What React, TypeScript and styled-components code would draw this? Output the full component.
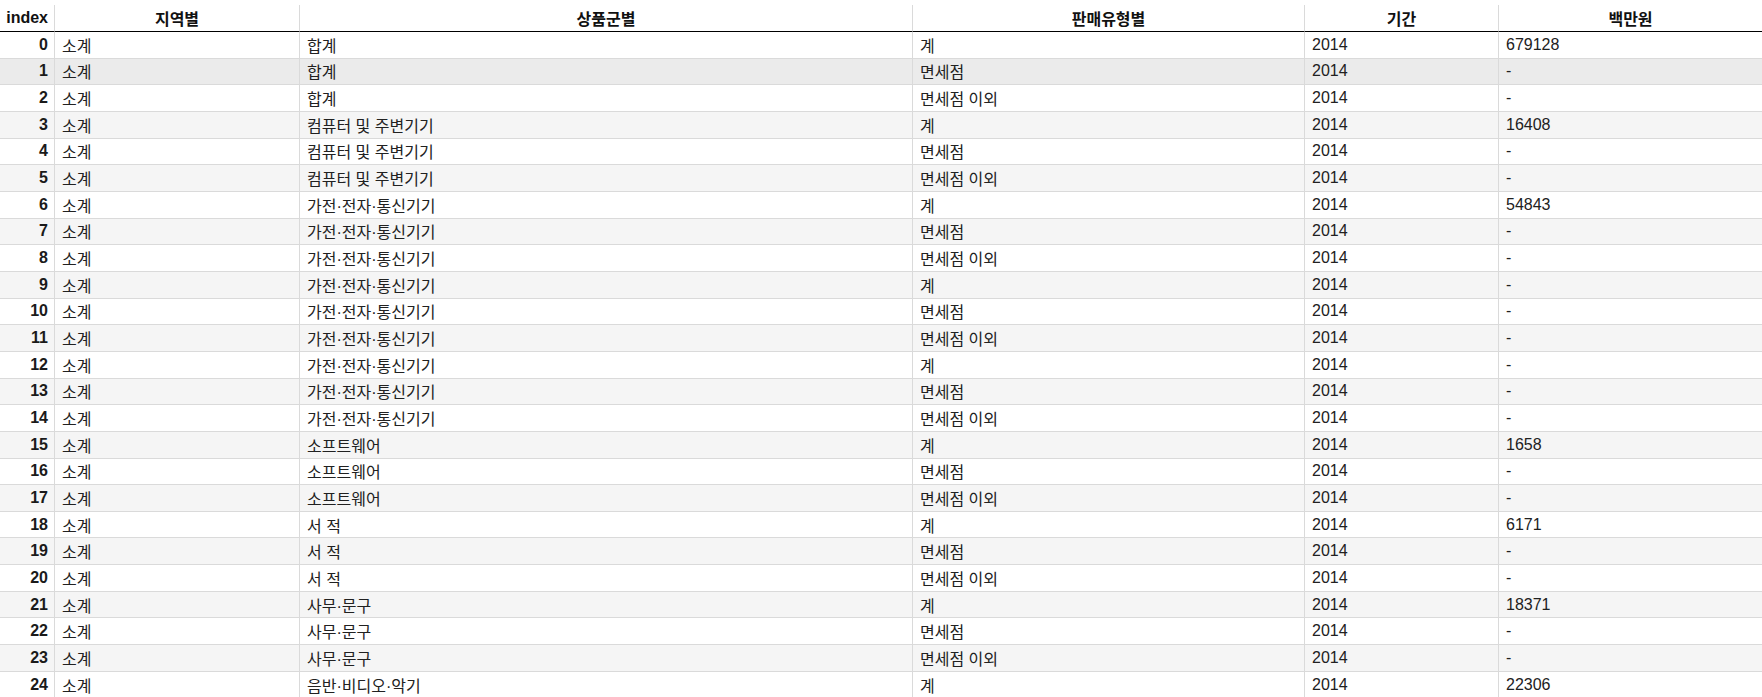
import React from 'react';
import styled, {createGlobalStyle} from "styled-components";

const GlobalStyle = createGlobalStyle`
    html, body {
        margin: 0;
        padding: 0;
        background: #ffffff;
    }
    body {
        font-family: "Liberation Sans", "Noto Sans CJK KR", Arial, sans-serif;
        color: #212121;
    }
`;

interface Row {
    region: string,
    product: string,
    saleType: string,
    period: string,
    value: string,
}

const products: [string, string][] = [
    ["합계", "679128"],
    ["컴퓨터 및 주변기기", "16408"],
    ["가전·전자·통신기기", "54843"],
    ["가전·전자·통신기기", "-"],
    ["가전·전자·통신기기", "-"],
    ["소프트웨어", "1658"],
    ["서 적", "6171"],
    ["사무·문구", "18371"],
    ["음반·비디오·악기", "22306"],
];

const saleTypes = ["계", "면세점", "면세점 이외"];

const rows: Row[] = products.flatMap(([product, total]) =>
    saleTypes.map((saleType, i) => ({
        region: "소계",
        product,
        saleType,
        period: "2014",
        value: i === 0 ? total : "-",
    }))
).slice(0, 25);

const columns = [
    {label: "index", width: 54},
    {label: "지역별", width: 245},
    {label: "상품군별", width: 613},
    {label: "판매유형별", width: 392},
    {label: "기간", width: 194},
    {label: "백만원", width: 264},
];

function App() {
    return (
        <>
            <GlobalStyle/>
            <Frame>
                <DataTable>
                    <colgroup>
                        {columns.map((c) => <col key={c.label} style={{width: c.width}}/>)}
                    </colgroup>
                    <thead>
                        <tr>
                            {columns.map((c, i) => (
                                <HeadCell key={c.label} $first={i === 0}>{c.label}</HeadCell>
                            ))}
                        </tr>
                    </thead>
                    <tbody>
                        {rows.map((row, i) => (
                            <BodyRow key={i} $striped={i % 2 === 1} $hovered={i === 1}>
                                <IndexCell>{i}</IndexCell>
                                <Cell>{row.region}</Cell>
                                <Cell>{row.product}</Cell>
                                <Cell>{row.saleType}</Cell>
                                <Cell>{row.period}</Cell>
                                <Cell>{row.value}</Cell>
                            </BodyRow>
                        ))}
                    </tbody>
                </DataTable>
            </Frame>
        </>
    );
}

const Frame = styled.div`
    padding-top: 5px;
    width: 1762px;
    overflow: hidden;
`;

const DataTable = styled.table`
    width: 1762px;
    table-layout: fixed;
    border-collapse: separate;
    border-spacing: 0;
    font-size: 16px;
    white-space: nowrap;
`;

const HeadCell = styled.th<{ $first: boolean }>`
    box-sizing: border-box;
    height: 27px;
    padding: 0 6px;
    font-weight: 700;
    color: #111111;
    text-align: ${(p) => (p.$first ? "right" : "center")};
    border-left: ${(p) => (p.$first ? "none" : "1px solid #dadada")};
    border-bottom: 1px solid #000000;
    vertical-align: middle;
`;

const BodyRow = styled.tr<{ $striped: boolean, $hovered: boolean }>`
    background: ${(p) => (p.$hovered ? "#ebebeb" : p.$striped ? "#f5f5f5" : "#ffffff")};
`;

const Cell = styled.td`
    box-sizing: border-box;
    height: 26.667px;
    padding: 0 7px;
    text-align: left;
    vertical-align: middle;
    border-left: 1px solid #dadada;
    border-bottom: 1px solid #dadada;
    overflow: hidden;
`;

const IndexCell = styled(Cell)`
    border-left: none;
    text-align: right;
    font-weight: 700;
    padding: 0 6px;
    color: #1a1a1a;
`;

export default App;
